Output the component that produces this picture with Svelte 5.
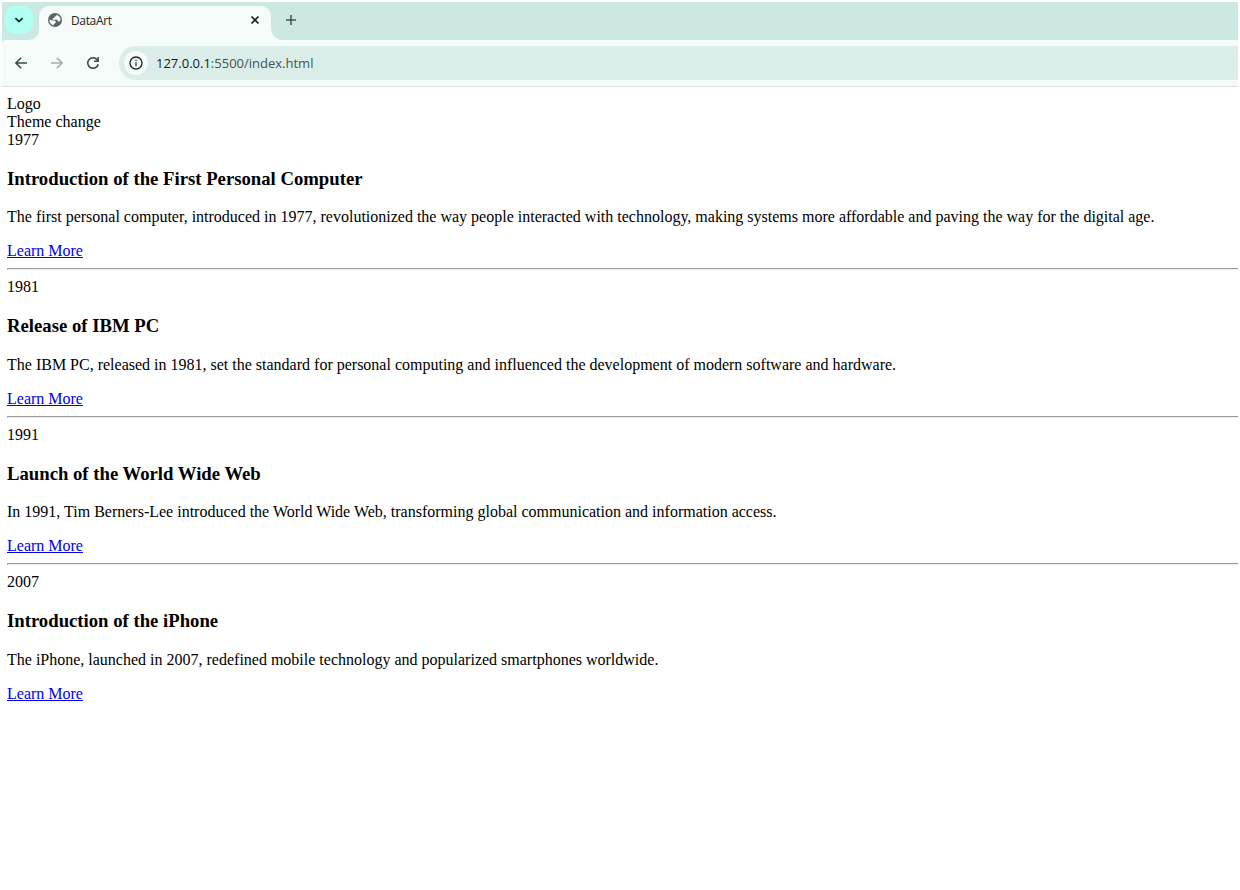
<script>
  const events = [
    { year: '1977', title: 'Introduction of the First Personal Computer', text: 'The first personal computer, introduced in 1977, revolutionized the way people interacted with technology, making systems more affordable and paving the way for the digital age.' },
    { year: '1981', title: 'Release of IBM PC', text: 'The IBM PC, released in 1981, set the standard for personal computing and influenced the development of modern software and hardware.' },
    { year: '1991', title: 'Launch of the World Wide Web', text: 'In 1991, Tim Berners-Lee introduced the World Wide Web, transforming global communication and information access.' },
    { year: '2007', title: 'Introduction of the iPhone', text: 'The iPhone, launched in 2007, redefined mobile technology and popularized smartphones worldwide.' }
  ];
</script>

<div class="window">
  <header>
    <div class="tabs">
      <div class="search-wrap">
        <div class="search">
          <svg width="10" height="10" viewBox="0 0 10 10"><path d="M1.4 3.2 5 6.6 8.6 3.2" fill="none" stroke="#10201d" stroke-width="1.7" /></svg>
        </div>
      </div>
      <div class="tab">
        <svg class="globe" width="14" height="14" viewBox="0 0 14 14">
          <circle cx="7" cy="7" r="7" fill="#5f6368" />
          <path d="M8.6 1.7C8.6 3 7.8 3.5 6.4 3.5v1.6H4.8v1.6h3.7c1 0 1.4.7 1.4 1.7h1.3c.7 0 1-.3 1.3-.8A5.6 5.6 0 0 0 8.6 1.7ZM1.4 6.6A5.6 5.6 0 0 0 5.7 12.4v-1.6c1.4 0 2-.6 2-1.8 0-1-.6-1.5-1.6-1.5H4.8Z" fill="#f4fbf8" />
        </svg>
        <span>DataArt</span>
        <svg class="close" width="10" height="10" viewBox="0 0 10 10"><path d="m1.5 1.5 7 7m0-7-7 7" stroke="#17211f" stroke-width="1.7" /></svg>
      </div>
      <div class="strip">
        <svg width="12" height="12" viewBox="0 0 12 12"><path d="M6 1v10M1 6h10" stroke="#3c5751" stroke-width="1.5" /></svg>
      </div>
    </div>
    <div class="toolbar">
      <svg class="nav" width="14" height="14" viewBox="0 0 14 14"><path d="M13 7H2m5.2-5.3L1.9 7l5.3 5.3" fill="none" stroke="#354f49" stroke-width="1.6" /></svg>
      <svg class="nav" width="14" height="14" viewBox="0 0 14 14"><path d="M1 7h11M6.8 1.7 12.1 7l-5.3 5.3" fill="none" stroke="#a1aeaa" stroke-width="1.6" /></svg>
      <svg class="nav" width="14" height="14" viewBox="0 0 14 14"><path d="M12.2 8.2A5.3 5.3 0 1 1 11.2 3.7L12 4.9" fill="none" stroke="#354f49" stroke-width="1.6" /><path d="M12.9 1v5H8V4.5h3.4V1Z" fill="#354f49" /></svg>
      <div class="address">
        <div class="info">
          <svg width="14" height="14" viewBox="0 0 14 14"><circle cx="7" cy="7" r="6" fill="none" stroke="#202b28" stroke-width="1.4" /><path d="M7 6.3v4M7 3.6v1.5" stroke="#35403d" stroke-width="1.3" /></svg>
        </div>
        <span class="url"><b>127.0.0.1</b>:5500/index.html</span>
      </div>
    </div>
  </header>

  <main>
    <div>Logo</div>
    <div>Theme change</div>
    {#each events as event, i}
      {#if i > 0}<hr />{/if}
      <div>{event.year}</div>
      <h3>{event.title}</h3>
      <p>{event.text}</p>
      <a href="#more">Learn More</a>
    {/each}
  </main>
</div>

<style>
  :global(body) { margin: 0; background: #fff; }
  .window { box-sizing: border-box; width: 1240px; height: 890px; padding: 2px 2px 0; overflow: hidden; background: #fff; }
  svg { display: block; flex: none; }
  header { background: #cce8e2; border-bottom: 1px solid #d8e5e1; font-family: "Open Sans", sans-serif; }
  .tabs { display: flex; height: 38px; background: linear-gradient(#cce8e2 50%, #f4fbf8 50%); }
  .search-wrap { box-sizing: border-box; width: 37px; height: 38px; padding: 4px 3px; background: #cce8e2; border-bottom-right-radius: 10px; }
  .search { display: grid; place-items: center; width: 28px; height: 28px; border-radius: 10px; background: #b1fff2; }
  .tab { box-sizing: border-box; display: flex; align-items: center; width: 232px; height: 34px; margin-top: 4px; padding: 0 11px 6px 9px; border-radius: 10px 10px 0 0; background: #f4fbf8; font-size: 12px; color: #202624; }
  .tab span { flex: 1; margin-left: 9px; letter-spacing: -0.35px; }
  .strip { box-sizing: border-box; flex: 1; padding: 12px 14px; background: #cce8e2; border-bottom-left-radius: 12px; }
  .toolbar { display: flex; align-items: center; height: 46px; padding-left: 12px; border-top-left-radius: 4px; background: #f4fbf8; }
  .nav { margin-right: 22px; }
  .address { display: flex; align-items: center; flex: 1; height: 34px; margin-left: -3px; padding-left: 5px; border-radius: 17px 0 0 17px; background: #daede8; }
  .info { display: grid; place-items: center; width: 24px; height: 24px; border-radius: 50%; background: #f4fbf8; }
  .url { margin-left: 8px; font-size: 13px; color: #455651; }
  .url b { font-weight: 400; color: #151d1b; }
  main { padding: 8px 0 0 5px; font: 16px/18px "Liberation Serif", serif; color: #000; }
  h3 { margin: 18.72px 0; font-size: 18.72px; line-height: 22px; }
  p { margin: 0 0 16px; white-space: nowrap; }
  a { display: block; color: #00e; text-decoration: underline; }
  hr { height: 0; margin: 8px 0; border: solid; border-width: 1px 0 1px 1px; border-color: #9a9a9a #eee #eee #9a9a9a; }
</style>
